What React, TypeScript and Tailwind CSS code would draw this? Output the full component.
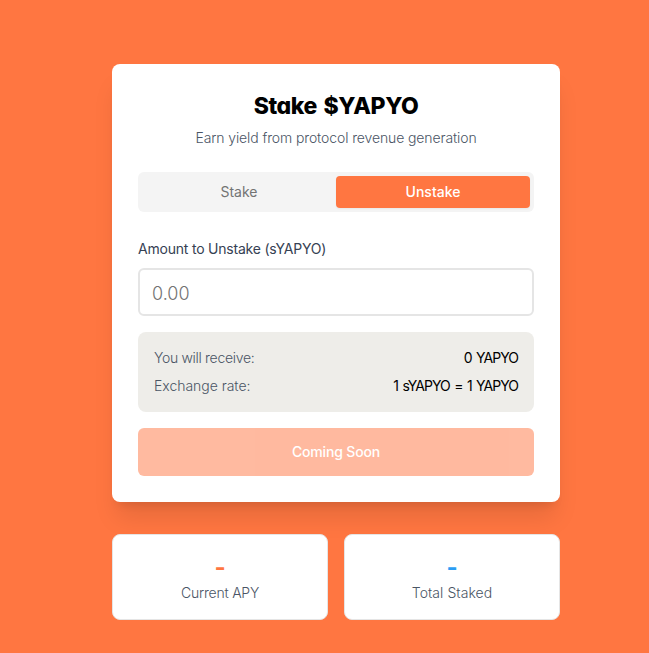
import React, { useState } from 'react'

const TABS = ['Stake', 'Unstake']

const STATS = [
  { label: 'Current APY', value: '-', color: 'text-[#ff7641]', tracking: 'tracking-[-0.015em]' },
  { label: 'Total Staked', value: '-', color: 'text-[#2b9df4]', tracking: 'tracking-[0.004em]' },
]

const InfoRow = ({
  label,
  value,
  tracking,
}: {
  label: string
  value: string
  tracking: string
}) => (
  <div className="flex items-center justify-between text-sm">
    <span className={`font-light text-gray-600 ${tracking}`}>{label}</span>
    <span className="font-normal tracking-[-0.07em] text-black [word-spacing:1.5px]">{value}</span>
  </div>
)

const App = () => {
  const [activeTab, setActiveTab] = useState('Unstake')
  const [amount, setAmount] = useState('')
  const isStake = activeTab === 'Stake'

  return (
    <div className="min-h-screen overflow-hidden bg-[#ff7641] pt-16 pl-28 font-['Inter',sans-serif]">
      <div className="w-md">
        <div className="rounded-lg bg-white p-[26px] shadow-[0_20px_25px_-5px_rgb(0_0_0/0.1),0_8px_10px_-6px_rgb(0_0_0/0.1)]">
          <div className="text-center">
            <h1 className="pt-px text-[23px] leading-[31px] font-extrabold tracking-[-0.018em] text-black [font-feature-settings:'cv11'] [word-spacing:2px]">
              Stake $YAPYO
            </h1>
            <p className="mt-1.5 text-sm font-light tracking-[-0.008em] text-gray-600">
              Earn yield from protocol revenue generation
            </p>
          </div>

          <div className="mt-6 flex h-10 rounded-md bg-[#f4f4f4] p-1">
            {TABS.map((tab) => (
              <button
                key={tab}
                className={
                  activeTab === tab
                    ? 'flex-1 rounded-sm bg-[#ff7641] text-sm font-medium text-white shadow-xs'
                    : 'flex-1 rounded-sm text-sm font-normal text-[#737373]'
                }
                onClick={() => setActiveTab(tab)}
              >
                {tab}
              </button>
            ))}
          </div>

          <label
            htmlFor="amount"
            className="mt-[27px] block text-sm font-normal tracking-[-0.015em] text-gray-700"
          >
            Amount to {activeTab} ({isStake ? 'YAPYO' : 'sYAPYO'})
          </label>
          <input
            id="amount"
            className="mt-[9px] block h-12 w-full rounded-md border-2 border-[#e5e5e5] bg-white px-3 pt-0.5 text-lg font-light text-black placeholder:text-[#737373] focus:outline-none"
            placeholder="0.00"
            value={amount}
            onChange={(e) => setAmount(e.target.value)}
          />

          <div className="mt-4 space-y-2 rounded-lg bg-[#eeede9] p-4">
            <InfoRow
              label="You will receive:"
              value={isStake ? '0 sYAPYO' : '0 YAPYO'}
              tracking="tracking-[-0.022em]"
            />
            <InfoRow
              label="Exchange rate:"
              value="1 sYAPYO = 1 YAPYO"
              tracking="tracking-[-0.002em]"
            />
          </div>

          <button
            disabled
            className="mt-4 h-12 w-full rounded-md bg-[#ff7641] text-sm font-medium tracking-[-0.012em] text-white opacity-50"
          >
            Coming Soon
          </button>
        </div>

        <div className="mt-8 grid grid-cols-2 gap-4">
          {STATS.map((stat) => (
            <div
              key={stat.label}
              className="rounded-lg border border-[#e5e5e5] bg-white p-4 text-center"
            >
              <div className={`pt-px text-2xl leading-[31px] font-bold ${stat.color}`}>
                {stat.value}
              </div>
              <div className={`text-sm font-light text-gray-600 ${stat.tracking}`}>{stat.label}</div>
            </div>
          ))}
        </div>
      </div>
    </div>
  )
}

export default App
